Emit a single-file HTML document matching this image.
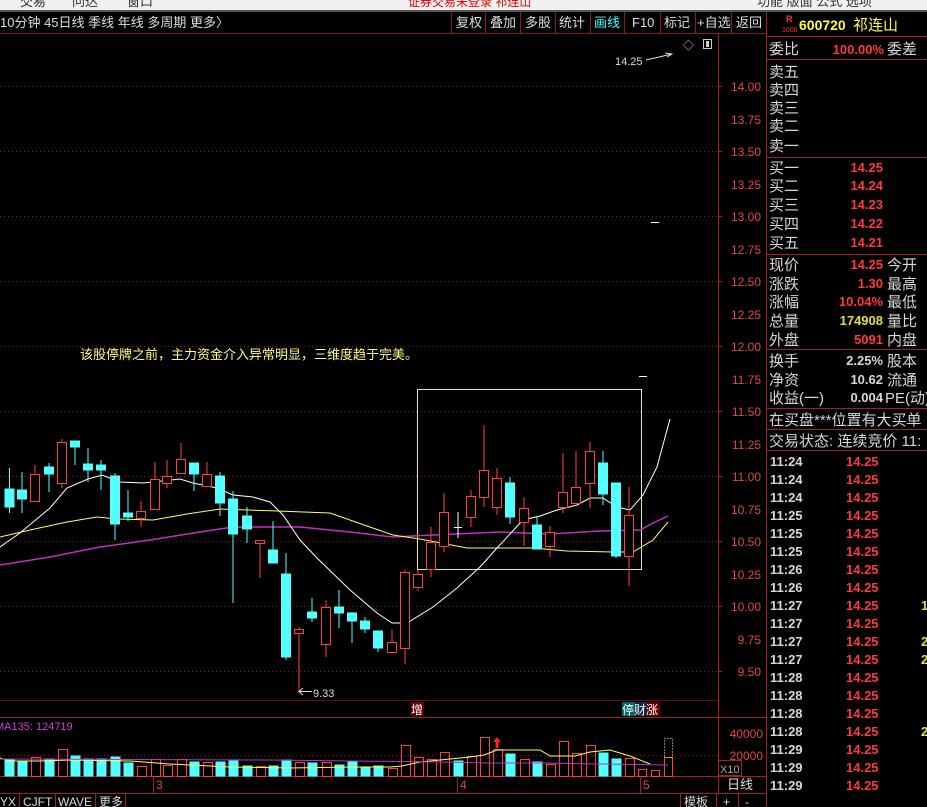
<!DOCTYPE html>
<html><head><meta charset="utf-8"><style>
html,body{margin:0;padding:0;background:#000;width:927px;height:807px;overflow:hidden}
svg{display:block}
text{font-family:"Liberation Sans","Noto Sans CJK SC",sans-serif}
</style></head><body>
<svg width="927" height="807" viewBox="0 0 927 807" xmlns="http://www.w3.org/2000/svg">
<rect width="927" height="807" fill="#000"/>
<!-- top menu -->
<rect x="0" y="0" width="927" height="10" fill="#f0f0f0"/>
<text x="20" y="6" font-size="13" fill="#333">交易</text>
<text x="72" y="6" font-size="13" fill="#333">问达</text>
<text x="127" y="6" font-size="13" fill="#333">窗口</text>
<text x="408" y="6" font-size="12" fill="#d00">证券交易未登录  祁连山</text>
<text x="757" y="6" font-size="13" fill="#333">功能  版面  公式  选项</text>
<rect x="0" y="10" width="927" height="2" fill="#555"/>
<!-- toolbar -->
<g font-size="13" fill="#ddd">
<text x="0" y="27">10分钟  45日线  季线  年线  多周期  更多〉</text>
<text x="456" y="27">复权</text><text x="490" y="27">叠加</text><text x="525" y="27">多股</text><text x="559" y="27">统计</text>
<text x="594" y="27" fill="#40ffff">画线</text><text x="632" y="27">F10</text><text x="664" y="27">标记</text><text x="697" y="27">+自选</text><text x="736" y="27">返回</text>
</g>
<g stroke="#8b1a1a" stroke-width="1">
<line x1="451.5" y1="12" x2="451.5" y2="33"/><line x1="485.5" y1="12" x2="485.5" y2="33"/><line x1="520.5" y1="12" x2="520.5" y2="33"/><line x1="555.5" y1="12" x2="555.5" y2="33"/><line x1="590.5" y1="12" x2="590.5" y2="33"/><line x1="624.5" y1="12" x2="624.5" y2="33"/><line x1="660.5" y1="12" x2="660.5" y2="33"/><line x1="695.5" y1="12" x2="695.5" y2="33"/><line x1="731.5" y1="12" x2="731.5" y2="33"/>
<line x1="0" y1="33.5" x2="766" y2="33.5"/>
</g>
<!-- grid -->
<g stroke="#8b1a1a" stroke-dasharray="1,3">
<line x1="0" y1="86.5" x2="718" y2="86.5"/><line x1="0" y1="151.5" x2="718" y2="151.5"/><line x1="0" y1="216.5" x2="718" y2="216.5"/><line x1="0" y1="281.5" x2="718" y2="281.5"/><line x1="0" y1="346.5" x2="718" y2="346.5"/><line x1="0" y1="411.5" x2="718" y2="411.5"/><line x1="0" y1="476.5" x2="718" y2="476.5"/><line x1="0" y1="541.5" x2="718" y2="541.5"/><line x1="0" y1="606.5" x2="718" y2="606.5"/><line x1="0" y1="671.5" x2="718" y2="671.5"/>
<line x1="0" y1="755.5" x2="718" y2="755.5"/>
</g>
<!-- axis -->
<g stroke="#a02020"><line x1="718.5" y1="33" x2="718.5" y2="793"/><line x1="766.5" y1="12" x2="766.5" y2="807"/>
<line x1="0" y1="717.5" x2="766" y2="717.5"/><line x1="0" y1="776.5" x2="766" y2="776.5"/><line x1="0" y1="793.5" x2="766" y2="793.5"/>
<line x1="0" y1="700.5" x2="718" y2="700.5" stroke="#5a1010"/>
</g>
<g font-size="12" fill="#e04848" text-anchor="end">
<text x="761" y="91">14.00</text><text x="761" y="124">13.75</text><text x="761" y="156">13.50</text><text x="761" y="189">13.25</text><text x="761" y="221">13.00</text><text x="761" y="254">12.75</text><text x="761" y="286">12.50</text><text x="761" y="319">12.25</text><text x="761" y="351">12.00</text><text x="761" y="384">11.75</text><text x="761" y="416">11.50</text><text x="761" y="449">11.25</text><text x="761" y="481">11.00</text><text x="761" y="514">10.75</text><text x="761" y="546">10.50</text><text x="761" y="579">10.25</text><text x="761" y="611">10.00</text><text x="761" y="644">9.75</text><text x="761" y="676">9.50</text>
<text x="763" y="738">40000</text><text x="763" y="760">20000</text>
</g>
<g stroke="#a02020"><line x1="718" y1="86.5" x2="722" y2="86.5"/><line x1="718" y1="151.5" x2="722" y2="151.5"/><line x1="718" y1="216.5" x2="722" y2="216.5"/><line x1="718" y1="281.5" x2="722" y2="281.5"/><line x1="718" y1="346.5" x2="722" y2="346.5"/><line x1="718" y1="411.5" x2="722" y2="411.5"/><line x1="718" y1="476.5" x2="722" y2="476.5"/><line x1="718" y1="541.5" x2="722" y2="541.5"/><line x1="718" y1="606.5" x2="722" y2="606.5"/><line x1="718" y1="671.5" x2="722" y2="671.5"/></g>
<rect x="718.5" y="760.5" width="23" height="15" fill="none" stroke="#a02020"/>
<text x="720" y="773" font-size="11" fill="#aaa">X10</text>
<text x="727" y="789" font-size="13" fill="#ddd">日线</text>
<!-- icons -->
<text x="683" y="49" font-size="11" fill="#ccc">◇</text>
<rect x="703.5" y="39.5" width="8" height="9" fill="none" stroke="#ccc"/><rect x="706" y="41" width="3" height="6" fill="#ccc"/>
<!-- annotation -->
<text x="80" y="359" font-size="13" fill="#ffff80">该股停牌之前，主力资金介入异常明显，三维度趋于完美。</text>
<rect x="417.5" y="389.5" width="224" height="180" fill="none" stroke="#f0f070"/>
<!-- MA lines -->
<polyline fill="none" stroke="#c030c0" stroke-width="1.5" points="0,565 50,557 100,547 150,540 200,532 233,527 300,527 350,532 393,537 433,535 500,532 550,534 600,531 640,530 653,523 668,516"/>
<polyline fill="none" stroke="#ffff60" stroke-width="1" points="0,537 30,530 67,522 97,517 117,519 153,520 187,514 220,509 277,511 330,513 367,526 393,535 420,539 467,548 533,548 567,551 613,552 633,552 653,540 668,522"/>
<polyline fill="none" stroke="#fff" stroke-width="1" points="0,547 20,533 50,508 67,488 88,479 102,475 120,482 143,483 180,479 193,483 217,488 233,495 253,497 270,502 283,515 300,540 317,558 350,590 377,613 392,623 407,623 433,607 457,588 480,567 497,548 523,520 540,516 557,510 577,505 590,498 603,498 617,507 630,510 643,495 657,467 670,419"/>
<!-- candles -->
<g stroke="#ff4040" fill="#000" stroke-width="1">
<line x1="35" y1="465" x2="35" y2="501"/><rect x="30.5" y="474.5" width="9" height="27"/>
<line x1="62" y1="439" x2="62" y2="488"/><rect x="57.5" y="442.5" width="9" height="41"/>
<line x1="141" y1="501" x2="141" y2="527"/><rect x="136.5" y="511.5" width="9" height="7"/>
<line x1="155" y1="462" x2="155" y2="509"/><rect x="150.5" y="479.5" width="9" height="30"/>
<line x1="167" y1="460" x2="167" y2="488"/><rect x="162.5" y="476.5" width="9" height="7"/>
<line x1="181" y1="443" x2="181" y2="473"/><rect x="176.5" y="459.5" width="9" height="14"/>
<line x1="207" y1="462" x2="207" y2="486"/><rect x="202.5" y="474.5" width="9" height="12"/>
<line x1="260" y1="540" x2="260" y2="578"/><rect x="255.5" y="540.5" width="9" height="3"/>
<line x1="299" y1="627" x2="299" y2="693"/><rect x="294.5" y="629.5" width="9" height="4"/>
<line x1="326" y1="600" x2="326" y2="657"/><rect x="321.5" y="607.5" width="9" height="37"/>
<line x1="392" y1="630" x2="392" y2="652"/><rect x="387.5" y="642.5" width="9" height="10"/>
<line x1="405" y1="570" x2="405" y2="664"/><rect x="400.5" y="572.5" width="9" height="76"/>
<line x1="418" y1="570" x2="418" y2="591"/><rect x="413.5" y="574.5" width="9" height="13"/>
<line x1="431" y1="527" x2="431" y2="577"/><rect x="426.5" y="542.5" width="9" height="27"/>
<line x1="444" y1="493" x2="444" y2="552"/><rect x="439.5" y="512.5" width="9" height="34"/>
<line x1="471" y1="490" x2="471" y2="527"/><rect x="466.5" y="496.5" width="9" height="21"/>
<line x1="484" y1="425" x2="484" y2="507"/><rect x="479.5" y="470.5" width="9" height="27"/>
<line x1="497" y1="468" x2="497" y2="515"/><rect x="492.5" y="478.5" width="9" height="29"/>
<line x1="524" y1="497" x2="524" y2="546"/><rect x="519.5" y="508.5" width="9" height="14"/>
<line x1="550" y1="526" x2="550" y2="557"/><rect x="545.5" y="532.5" width="9" height="14"/>
<line x1="563" y1="453" x2="563" y2="513"/><rect x="558.5" y="492.5" width="9" height="15"/>
<line x1="576" y1="451" x2="576" y2="503"/><rect x="571.5" y="487.5" width="9" height="16"/>
<line x1="590" y1="442" x2="590" y2="508"/><rect x="585.5" y="451.5" width="9" height="32"/>
<line x1="629" y1="487" x2="629" y2="586"/><rect x="624.5" y="515.5" width="9" height="41"/>
</g>
<g stroke="#54ffff" fill="#54ffff" stroke-width="1">
<line x1="9.5" y1="468" x2="9.5" y2="513"/><rect x="5" y="489" width="9" height="18"/>
<line x1="22" y1="472" x2="22" y2="513"/><rect x="17.5" y="490" width="9" height="9"/>
<line x1="49" y1="463" x2="49" y2="492"/><rect x="44.5" y="467" width="9" height="7"/>
<line x1="75" y1="441" x2="75" y2="465"/><rect x="70.5" y="441" width="9" height="6"/>
<line x1="88" y1="448" x2="88" y2="482"/><rect x="83.5" y="464" width="9" height="6"/>
<line x1="101" y1="460" x2="101" y2="490"/><rect x="96.5" y="465" width="9" height="5"/>
<line x1="115" y1="473" x2="115" y2="540"/><rect x="110.5" y="476" width="9" height="48"/>
<line x1="128" y1="490" x2="128" y2="521"/><rect x="123.5" y="513" width="9" height="4"/>
<line x1="194" y1="463" x2="194" y2="491"/><rect x="189.5" y="463" width="9" height="11"/>
<line x1="220" y1="472" x2="220" y2="516"/><rect x="215.5" y="476" width="9" height="27"/>
<line x1="233" y1="491" x2="233" y2="603"/><rect x="228.5" y="499" width="9" height="35"/>
<line x1="247" y1="507" x2="247" y2="543"/><rect x="242.5" y="516" width="9" height="13"/>
<line x1="273" y1="521" x2="273" y2="563"/><rect x="268.5" y="550" width="9" height="13"/>
<line x1="286" y1="553" x2="286" y2="660"/><rect x="281.5" y="574" width="9" height="83"/>
<line x1="312" y1="598" x2="312" y2="622"/><rect x="307.5" y="612" width="9" height="6"/>
<line x1="339" y1="590" x2="339" y2="628"/><rect x="334.5" y="607" width="9" height="6"/>
<line x1="352" y1="612" x2="352" y2="643"/><rect x="347.5" y="613" width="9" height="8"/>
<line x1="365" y1="617" x2="365" y2="633"/><rect x="360.5" y="621" width="9" height="8"/>
<line x1="378" y1="631" x2="378" y2="652"/><rect x="373.5" y="631" width="9" height="17"/>
<line x1="510" y1="477" x2="510" y2="524"/><rect x="505.5" y="483" width="9" height="34"/>
<line x1="537" y1="516" x2="537" y2="549"/><rect x="532.5" y="525" width="9" height="24"/>
<line x1="603" y1="451" x2="603" y2="505"/><rect x="598.5" y="463" width="9" height="31"/>
<line x1="616" y1="483" x2="616" y2="558"/><rect x="611.5" y="483" width="9" height="73"/>
</g>
<g stroke="#fff"><line x1="458" y1="512" x2="458" y2="538"/><line x1="454" y1="527.5" x2="462" y2="527.5"/>
<line x1="639" y1="376.5" x2="647" y2="376.5"/><line x1="651" y1="222.5" x2="659" y2="222.5"/></g>
<text x="615" y="65" font-size="11" fill="#ddd">14.25</text>
<polyline points="646,60 672,54" fill="none" stroke="#ddd"/><polyline points="665,53 672,54 667,57" fill="none" stroke="#ddd"/>
<line x1="299" y1="691.5" x2="312" y2="691.5" stroke="#ddd"/><polyline points="303,688 299,691.5 303,695" fill="none" stroke="#ddd"/>
<text x="313" y="697" font-size="11" fill="#ddd">9.33</text>
<!-- signals -->
<rect x="411" y="702" width="13" height="14" fill="#600"/><text x="411" y="714" font-size="12" fill="#fff">增</text>
<rect x="622" y="702" width="13" height="14" fill="#066"/><rect x="635" y="702" width="12" height="14" fill="#124"/><rect x="647" y="702" width="13" height="14" fill="#600"/>
<text x="622" y="714" font-size="12" fill="#fff">停财涨</text>
<text x="-5" y="730" font-size="11" fill="#d040d0">MA135: 124719</text>
<!-- volume -->
<g stroke="#54ffff" fill="#54ffff">
<rect x="5" y="760" width="9" height="16"/><rect x="18" y="761" width="9" height="15"/><rect x="45" y="759" width="9" height="17"/><rect x="71" y="756" width="9" height="20"/><rect x="84" y="759" width="9" height="17"/><rect x="97" y="759" width="9" height="17"/><rect x="111" y="757" width="9" height="19"/><rect x="124" y="763" width="9" height="13"/><rect x="190" y="762" width="9" height="14"/><rect x="216" y="762" width="9" height="14"/><rect x="229" y="761" width="9" height="15"/><rect x="243" y="766" width="9" height="10"/><rect x="269" y="766" width="9" height="10"/><rect x="282" y="760" width="9" height="16"/><rect x="308" y="763" width="9" height="13"/><rect x="335" y="765" width="9" height="11"/><rect x="348" y="762" width="9" height="14"/><rect x="361" y="768" width="9" height="8"/><rect x="374" y="766" width="9" height="10"/><rect x="454" y="761" width="9" height="15"/><rect x="506" y="754" width="9" height="22"/><rect x="533" y="762" width="9" height="14"/><rect x="599" y="753" width="9" height="23"/><rect x="612" y="759" width="9" height="17"/>
</g>
<g stroke="#ff4040" fill="none">
<rect x="31.5" y="757.5" width="9" height="19"/><rect x="58.5" y="749.5" width="9" height="27"/><rect x="137.5" y="766.5" width="9" height="10"/><rect x="151.5" y="759.5" width="9" height="17"/><rect x="163.5" y="765.5" width="9" height="11"/><rect x="177.5" y="759.5" width="9" height="17"/><rect x="203.5" y="762.5" width="9" height="14"/><rect x="256.5" y="766.5" width="9" height="10"/><rect x="295.5" y="762.5" width="9" height="14"/><rect x="322.5" y="762.5" width="9" height="14"/><rect x="388.5" y="768.5" width="9" height="8"/><rect x="401.5" y="745.5" width="9" height="31"/><rect x="414.5" y="757.5" width="9" height="19"/><rect x="427.5" y="759.5" width="9" height="17"/><rect x="440.5" y="752.5" width="9" height="24"/><rect x="467.5" y="756.5" width="9" height="20"/><rect x="480.5" y="737.5" width="9" height="39"/><rect x="493.5" y="749.5" width="9" height="27"/><rect x="520.5" y="759.5" width="9" height="17"/><rect x="546.5" y="764.5" width="9" height="12"/><rect x="559.5" y="741.5" width="9" height="35"/><rect x="572.5" y="753.5" width="9" height="23"/><rect x="586.5" y="745.5" width="9" height="31"/><rect x="625.5" y="758.5" width="9" height="18"/><rect x="638.5" y="769.5" width="8" height="7"/><rect x="651.5" y="770.5" width="8" height="6"/><rect x="664.5" y="757.5" width="8" height="19"/>
</g>
<rect x="664.5" y="738.5" width="8" height="19" fill="none" stroke="#ffff80" stroke-dasharray="1,2"/>
<polygon points="497,737 493,742 495.5,742 495.5,748 498.5,748 498.5,742 501,742" fill="#ff2020"/>
<polyline fill="none" stroke="#ffff60" points="0,758 10,761 40,761 70,760 130,761 170,764 230,767 290,768 350,767 390,767 402,766 420,762 440,760 470,757 484,755 497,750 540,750 550,756 575,756 590,752 610,750 630,756 650,764"/>
<polyline fill="none" stroke="#c030c0" points="0,759 270,760 440,762 490,763 540,763 600,764 668,765"/>
<!-- date row -->
<g stroke="#a02020"><line x1="153.5" y1="776" x2="153.5" y2="793"/><line x1="457.5" y1="776" x2="457.5" y2="793"/><line x1="640.5" y1="776" x2="640.5" y2="793"/></g>
<g font-size="12" fill="#e04848"><text x="156" y="789">3</text><text x="460" y="789">4</text><text x="643" y="789">5</text></g>
<!-- bottom tabs -->
<g font-size="12" fill="#ddd"><text x="0" y="806">YX</text><text x="23" y="806">CJFT</text><text x="58" y="806">WAVE</text><text x="99" y="806">更多</text><text x="684" y="806">模板</text><text x="723" y="806">+</text><text x="745" y="806">-</text></g>
<g stroke="#a02020"><line x1="19.5" y1="793" x2="19.5" y2="807"/><line x1="55.5" y1="793" x2="55.5" y2="807"/><line x1="95.5" y1="793" x2="95.5" y2="807"/><line x1="125.5" y1="793" x2="125.5" y2="807"/><line x1="680.5" y1="793" x2="680.5" y2="807"/><line x1="716.5" y1="793" x2="716.5" y2="807"/><line x1="738.5" y1="793" x2="738.5" y2="807"/></g>
<!-- right panel -->
<text x="786" y="22" font-size="9" fill="#ff3030" font-weight="bold">R</text>
<text x="782" y="32" font-size="7" fill="#ff3030">1000</text>
<text x="799" y="30" font-size="14" fill="#ffff40" font-weight="bold">600720</text>
<text x="853" y="30" font-size="15" fill="#ffff40">祁连山</text>
<g stroke="#a02020"><line x1="766" y1="36.5" x2="927" y2="36.5"/><line x1="766" y1="59.5" x2="927" y2="59.5"/><line x1="766" y1="157.5" x2="927" y2="157.5"/><line x1="766" y1="254.5" x2="927" y2="254.5"/><line x1="766" y1="349.5" x2="927" y2="349.5"/><line x1="766" y1="408.5" x2="927" y2="408.5"/><line x1="766" y1="429.5" x2="927" y2="429.5"/><line x1="766" y1="450.5" x2="927" y2="450.5"/></g>
<g font-size="15" fill="#d8d8d8">
<text x="769" y="54">委比</text><text x="887" y="54">委差</text>
<text x="769" y="77">卖五</text><text x="769" y="95">卖四</text><text x="769" y="113">卖三</text><text x="769" y="131">卖二</text><text x="769" y="151">卖一</text>
<text x="769" y="173">买一</text><text x="769" y="191">买二</text><text x="769" y="210">买三</text><text x="769" y="229">买四</text><text x="769" y="248">买五</text>
<text x="769" y="270">现价</text><text x="769" y="289">涨跌</text><text x="769" y="307">涨幅</text><text x="769" y="326">总量</text><text x="769" y="345">外盘</text>
<text x="887" y="270">今开</text><text x="887" y="289">最高</text><text x="887" y="307">最低</text><text x="887" y="326">量比</text><text x="887" y="345">内盘</text>
<text x="769" y="366">换手</text><text x="769" y="385">净资</text><text x="769" y="403">收益(一)</text>
<text x="887" y="366">股本</text><text x="887" y="385">流通</text><text x="885" y="403">PE(动)</text>
<text x="769" y="425">在买盘***位置有大买单</text>
<text x="769" y="446">交易状态: 连续竞价 11:</text>
</g>
<g font-size="13" font-weight="bold" fill="#ff3a3a" text-anchor="end">
<text x="884" y="54">100.00%</text>
<text x="883" y="172">14.25</text><text x="883" y="190">14.24</text><text x="883" y="209">14.23</text><text x="883" y="228">14.22</text><text x="883" y="247">14.21</text>
<text x="883" y="269">14.25</text><text x="883" y="288">1.30</text><text x="883" y="306">10.04%</text><text x="883" y="325" fill="#e0e040">174908</text><text x="883" y="344">5091</text>
<text x="883" y="365" fill="#d8d8d8">2.25%</text><text x="883" y="384" fill="#d8d8d8">10.62</text><text x="883" y="402" fill="#d8d8d8">0.004</text>
</g>
<g font-size="13" font-weight="bold" fill="#d8d8d8">
<text x="770" y="466">11:24</text><text x="770" y="484">11:24</text><text x="770" y="502">11:24</text><text x="770" y="520">11:25</text><text x="770" y="538">11:25</text><text x="770" y="556">11:25</text><text x="770" y="574">11:26</text><text x="770" y="592">11:26</text><text x="770" y="610">11:27</text><text x="770" y="628">11:27</text><text x="770" y="646">11:27</text><text x="770" y="664">11:27</text><text x="770" y="682">11:28</text><text x="770" y="700">11:28</text><text x="770" y="718">11:28</text><text x="770" y="736">11:28</text><text x="770" y="754">11:29</text><text x="770" y="772">11:29</text><text x="770" y="790">11:29</text>
</g>
<g font-size="13" font-weight="bold" fill="#ff3a3a">
<text x="846" y="466">14.25</text><text x="846" y="484">14.25</text><text x="846" y="502">14.25</text><text x="846" y="520">14.25</text><text x="846" y="538">14.25</text><text x="846" y="556">14.25</text><text x="846" y="574">14.25</text><text x="846" y="592">14.25</text><text x="846" y="610">14.25</text><text x="846" y="628">14.25</text><text x="846" y="646">14.25</text><text x="846" y="664">14.25</text><text x="846" y="682">14.25</text><text x="846" y="700">14.25</text><text x="846" y="718">14.25</text><text x="846" y="736">14.25</text><text x="846" y="754">14.25</text><text x="846" y="772">14.25</text><text x="846" y="790">14.25</text>
</g>
<g font-size="13" font-weight="bold" fill="#e0e040"><text x="921" y="610">1</text><text x="921" y="646">2</text><text x="921" y="664">2</text><text x="921" y="736">2</text></g>
</svg>
</body></html>
